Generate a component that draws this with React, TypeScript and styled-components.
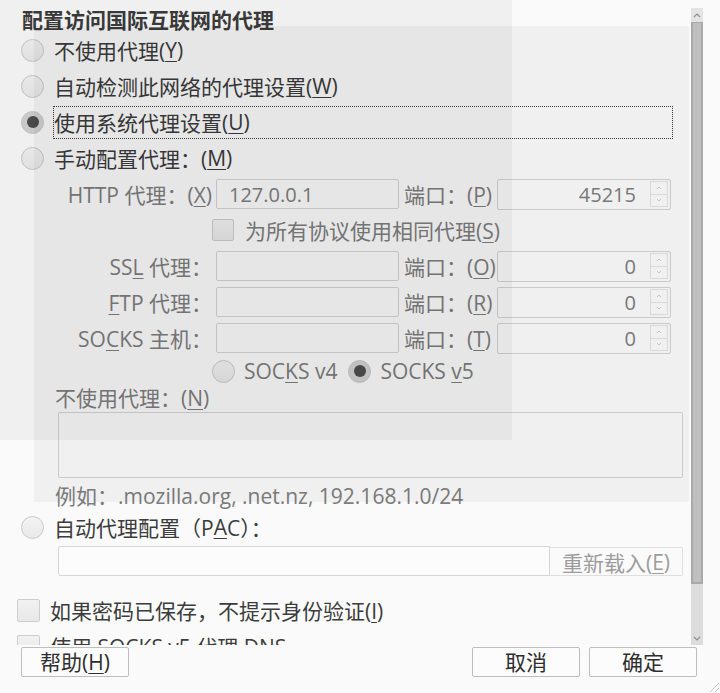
import React from "react";
import styled, { createGlobalStyle } from "styled-components";

const FONT = `"Open Sans", "Noto Sans CJK SC", sans-serif`;

const Global = createGlobalStyle`
  html, body { margin: 0; padding: 0; background: #fafafa; }
  body { font-family: ${FONT}; }
`;

const Page = styled.div`
  position: relative;
  width: 720px;
  height: 693px;
  overflow: hidden;
  background: #fafafa;
  color: #3c3c3c;
  font-family: ${FONT};
  font-size: 21px;
  display: flex;
  flex-direction: column;
`;

const Shade = styled.div<{ $l: number; $t: number; $w: number; $h: number }>`
  position: absolute;
  left: ${(p) => p.$l}px;
  top: ${(p) => p.$t}px;
  width: ${(p) => p.$w}px;
  height: ${(p) => p.$h}px;
  background: rgba(0, 0, 0, 0.04);
  pointer-events: none;
`;

const Main = styled.div`
  display: flex;
  height: 645px;
  flex-shrink: 0;
`;

const Scroller = styled.div`
  width: 690px;
  height: 645px;
  overflow: hidden;
  padding-top: 8px;
  box-sizing: border-box;
  display: flex;
  flex-direction: column;
`;

const ScrollBar = styled.div`
  margin-left: 1px;
  margin-top: 8px;
  width: 12px;
  height: 637px;
  display: flex;
  flex-direction: column;
  background: #dcdcdc;
`;

const ScrollArrow = styled.div<{ $down?: boolean }>`
  height: 14px;
  background: ${(p) => (p.$down ? "transparent" : "#e4e4e4")};
  display: flex;
  align-items: center;
  justify-content: center;
  flex-shrink: 0;
`;

const Thumb = styled.div`
  height: 562px;
  box-sizing: border-box;
  background: #bfbfbf;
  border: 2px solid #a9a9a9;
  border-top-width: 1px;
  flex-shrink: 0;
`;

const Trough = styled.div`
  flex: 1;
`;

const Title = styled.div`
  margin-left: 22px;
  font-weight: 700;
  line-height: 24px;
  height: 24px;
  white-space: nowrap;
`;

const OptionRow = styled.div<{ $gapTop?: number }>`
  display: flex;
  align-items: center;
  height: 36px;
  padding-left: 21px;
  margin-top: ${(p) => p.$gapTop ?? 0}px;
  flex-shrink: 0;
`;

const Radio = styled.span<{ $checked?: boolean }>`
  width: 23px;
  height: 23px;
  border-radius: 50%;
  box-sizing: border-box;
  border: 1px solid #c9c9c9;
  background: ${(p) =>
    p.$checked ? "#d2d2d2" : "linear-gradient(#f3f3f3, #e9e9e9)"};
  display: flex;
  align-items: center;
  justify-content: center;
  flex-shrink: 0;
  &::after {
    content: "";
    display: ${(p) => (p.$checked ? "block" : "none")};
    width: 12px;
    height: 12px;
    border-radius: 50%;
    background: #4e4e4e;
  }
`;

const OptionLabel = styled.span<{ $focused?: boolean }>`
  margin-left: 9px;
  margin-right: 17px;
  flex: 1;
  height: 33px;
  box-sizing: border-box;
  border: 1px dotted ${(p) => (p.$focused ? "#3a3a3a" : "transparent")};
  display: flex;
  align-items: center;
  white-space: nowrap;
`;

const Key = styled.span`
  text-decoration: underline;
  text-decoration-thickness: 1px;
  text-underline-offset: 3px;
`;

const ManualGrid = styled.div`
  display: grid;
  grid-template-columns: 212px 187px 98px 174px;
  grid-template-rows: repeat(5, 36px) 30px;
  align-items: center;
  color: #7d7d7d;
  flex-shrink: 0;
`;

const FieldLabel = styled.span`
  text-align: right;
  white-space: nowrap;
`;

const TextBox = styled.div`
  margin-left: 4px;
  height: 30px;
  border: 1px solid #d3d3d3;
  border-radius: 2px;
  box-sizing: border-box;
  display: flex;
  align-items: center;
  padding-left: 12px;
  font-size: 20px;
`;

const PortLabel = styled.span`
  padding-left: 5px;
  white-space: nowrap;
`;

const SpinBox = styled.div`
  height: 31px;
  border: 1px solid #d3d3d3;
  border-radius: 2px;
  box-sizing: border-box;
  display: flex;
  align-items: center;
  justify-content: flex-end;
  padding-right: 2px;
`;

const SpinValue = styled.span`
  margin-right: 14px;
  font-size: 20px;
`;

const SpinButtons = styled.div`
  width: 18px;
  height: 26px;
  box-sizing: border-box;
  border: 1px solid #e2e2e2;
  display: flex;
  flex-direction: column;
`;

const SpinHalf = styled.div<{ $down?: boolean }>`
  flex: 1;
  display: flex;
  align-items: center;
  justify-content: center;
  border-top: ${(p) => (p.$down ? "1px solid #e2e2e2" : "none")};
`;

const SpanRow = styled.div`
  grid-column: 2 / 5;
  display: flex;
  align-items: center;
  white-space: nowrap;
`;

const CheckBox = styled.span<{ $size?: number }>`
  width: ${(p) => p.$size ?? 22}px;
  height: ${(p) => p.$size ?? 22}px;
  box-sizing: border-box;
  border: 1px solid #cdcdcd;
  border-radius: 2px;
  background: linear-gradient(#f1f1f1, #e8e8e8);
  flex-shrink: 0;
`;

const InlineText = styled.span<{ $gap: number }>`
  margin-left: ${(p) => p.$gap}px;
`;

const SocksChoice = styled.span`
  display: flex;
  align-items: center;
  margin-right: 11px;
  & > span:last-child {
    margin-left: 9px;
  }
`;

const Section = styled.div`
  padding-left: 55px;
  color: #7d7d7d;
  display: flex;
  flex-direction: column;
  flex-shrink: 0;
`;

const SectionLabel = styled.div<{ $gapTop?: number }>`
  line-height: 24px;
  height: 24px;
  margin-top: ${(p) => p.$gapTop ?? 0}px;
  white-space: nowrap;
`;

const TextArea = styled.div`
  margin: 2px 0 0 3px;
  width: 625px;
  height: 66px;
  border: 1px solid #d3d3d3;
  border-radius: 2px;
  box-sizing: border-box;
`;

const PacRow = styled.div`
  display: flex;
  margin: 1px 0 0 58px;
  height: 30px;
  flex-shrink: 0;
`;

const PacInput = styled.div`
  width: 492px;
  height: 30px;
  box-sizing: border-box;
  border: 1px solid #d6d6d6;
  border-radius: 2px 0 0 2px;
  background: #fcfcfc;
`;

const ReloadButton = styled.div`
  width: 133px;
  height: 29px;
  margin-top: 1px;
  box-sizing: border-box;
  border: 1px solid #dedede;
  border-left: none;
  border-radius: 0 2px 2px 0;
  color: #9c9c9c;
  display: flex;
  align-items: center;
  justify-content: center;
  white-space: nowrap;
`;

const CheckRow = styled.div<{ $gapTop?: number }>`
  display: flex;
  align-items: center;
  height: 36px;
  padding-left: 17px;
  margin-top: ${(p) => p.$gapTop ?? 0}px;
  white-space: nowrap;
  flex-shrink: 0;
`;

const ButtonBar = styled.div`
  display: flex;
  align-items: flex-start;
  padding: 2px 23px 0 21px;
  gap: 9px;
`;

const Button = styled.button`
  width: 108px;
  height: 30px;
  box-sizing: border-box;
  border: 1px solid #bdbdbd;
  border-radius: 2px;
  background: #fcfcfc;
  color: #2e2e2e;
  font-family: ${FONT};
  font-size: 21px;
  line-height: 1;
  padding: 0;
`;

const Spacer = styled.div`
  flex: 1;
`;

const Grip = styled.svg`
  position: absolute;
  right: 0;
  bottom: 0;
`;

const Caret = ({ down }: { down?: boolean }) => (
  <svg width="8" height="5" viewBox="0 0 8 5">
    <path
      d={down ? "M1 1 L4 4 L7 1" : "M1 4 L4 1 L7 4"}
      fill="none"
      stroke="#8e8e8e"
      strokeWidth="1.2"
    />
  </svg>
);

const TinyCaret = ({ down }: { down?: boolean }) => (
  <svg width="6" height="4" viewBox="0 0 6 4">
    <path
      d={down ? "M1 1 L3 3 L5 1" : "M1 3 L3 1 L5 3"}
      fill="none"
      stroke="#cfcfcf"
      strokeWidth="1"
    />
  </svg>
);

const Spin = ({ value }: { value: string }) => (
  <SpinBox>
    <SpinValue>{value}</SpinValue>
    <SpinButtons>
      <SpinHalf>
        <TinyCaret />
      </SpinHalf>
      <SpinHalf $down>
        <TinyCaret down />
      </SpinHalf>
    </SpinButtons>
  </SpinBox>
);

type Row = { label: React.ReactNode; host?: string; port: React.ReactNode; value: string };

const rows: Row[] = [
  { label: <>HTTP 代理：(<Key>X</Key>)</>, host: "127.0.0.1", port: <>端口：(<Key>P</Key>)</>, value: "45215" },
  { label: <>SS<Key>L</Key> 代理：</>, port: <>端口：(<Key>O</Key>)</>, value: "0" },
  { label: <><Key>F</Key>TP 代理：</>, port: <>端口：(<Key>R</Key>)</>, value: "0" },
  { label: <>SO<Key>C</Key>KS 主机：</>, port: <>端口：(<Key>T</Key>)</>, value: "0" },
];

const ProxyRow = ({ r }: { r: Row }) => (
  <>
    <FieldLabel>{r.label}</FieldLabel>
    <TextBox>{r.host}</TextBox>
    <PortLabel>{r.port}</PortLabel>
    <Spin value={r.value} />
  </>
);

export default function App() {
  return (
    <Page>
      <Global />
      <Main>
        <Scroller>
          <Title>配置访问国际互联网的代理</Title>
          <OptionRow>
            <Radio />
            <OptionLabel>
              不使用代理(<Key>Y</Key>)
            </OptionLabel>
          </OptionRow>
          <OptionRow>
            <Radio />
            <OptionLabel>
              自动检测此网络的代理设置(<Key>W</Key>)
            </OptionLabel>
          </OptionRow>
          <OptionRow>
            <Radio $checked />
            <OptionLabel $focused>
              使用系统代理设置(<Key>U</Key>)
            </OptionLabel>
          </OptionRow>
          <OptionRow>
            <Radio />
            <OptionLabel>
              手动配置代理：(<Key>M</Key>)
            </OptionLabel>
          </OptionRow>
          <ManualGrid>
            <ProxyRow r={rows[0]} />
            <SpanRow>
              <CheckBox />
              <InlineText $gap={11}>
                为所有协议使用相同代理(<Key>S</Key>)
              </InlineText>
            </SpanRow>
            {rows.slice(1).map((r, i) => (
              <ProxyRow key={i} r={r} />
            ))}
            <SpanRow>
              <SocksChoice>
                <Radio />
                <span>
                  SOC<Key>K</Key>S v4
                </span>
              </SocksChoice>
              <SocksChoice>
                <Radio $checked />
                <span>
                  SOCKS <Key>v</Key>5
                </span>
              </SocksChoice>
            </SpanRow>
          </ManualGrid>
          <Section>
            <SectionLabel>
              不使用代理：(<Key>N</Key>)
            </SectionLabel>
            <TextArea />
            <SectionLabel $gapTop={6}>例如：.mozilla.org, .net.nz, 192.168.1.0/24</SectionLabel>
          </Section>
          <OptionRow $gapTop={1}>
            <Radio />
            <OptionLabel>
              自动代理配置（P<Key>A</Key>C）：
            </OptionLabel>
          </OptionRow>
          <PacRow>
            <PacInput />
            <ReloadButton>
              重新载入(<Key>E</Key>)
            </ReloadButton>
          </PacRow>
          <CheckRow $gapTop={16}>
            <CheckBox $size={23} />
            <InlineText $gap={10}>
              如果密码已保存，不提示身份验证(<Key>I</Key>)
            </InlineText>
          </CheckRow>
          <CheckRow>
            <CheckBox $size={23} />
            <InlineText $gap={10}>使用 SOCKS v5 代理 DNS</InlineText>
          </CheckRow>
        </Scroller>
        <ScrollBar>
          <ScrollArrow>
            <Caret />
          </ScrollArrow>
          <Thumb />
          <Trough />
          <ScrollArrow $down>
            <Caret down />
          </ScrollArrow>
        </ScrollBar>
      </Main>
      <ButtonBar>
        <Button>
          帮助(<Key>H</Key>)
        </Button>
        <Spacer />
        <Button>取消</Button>
        <Button>确定</Button>
      </ButtonBar>
      <Shade $l={0} $t={0} $w={512} $h={440} />
      <Shade $l={34} $t={26} $w={655} $h={476} />
      <Grip width="14" height="14" viewBox="0 0 14 14">
        <path d="M13 4 L4 13 M13 9 L9 13" stroke="#c8c8c8" strokeWidth="1" />
      </Grip>
    </Page>
  );
}
